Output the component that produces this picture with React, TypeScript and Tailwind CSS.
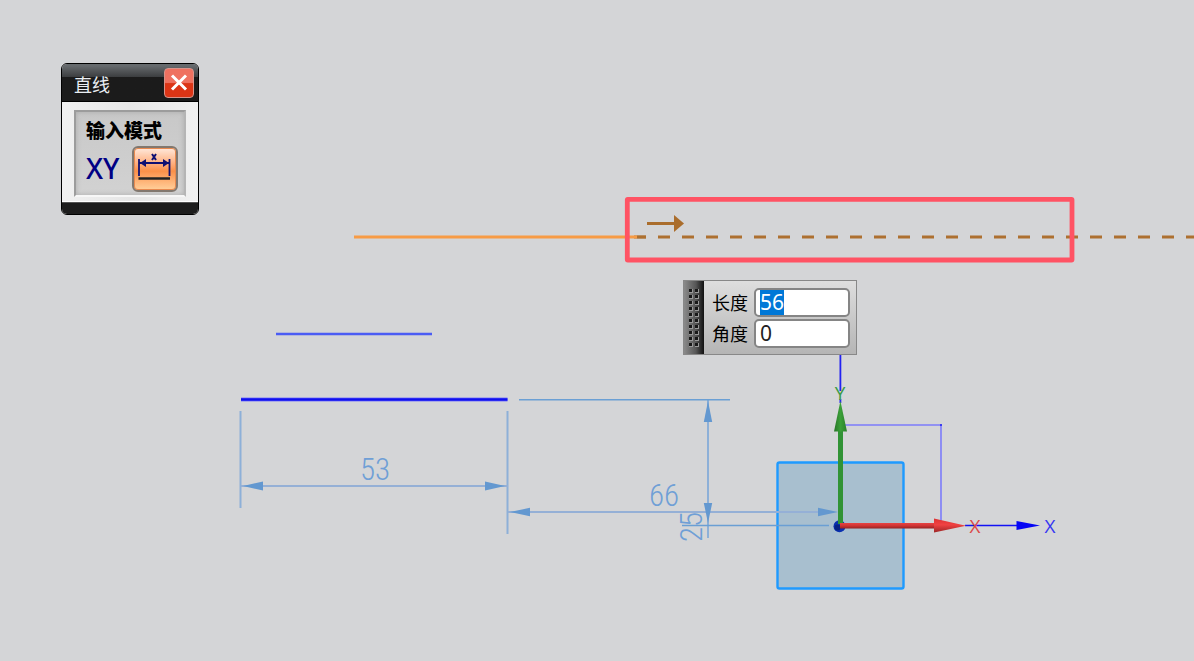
import { useEffect, useRef } from "react";

const grip = Array.from({ length: 20 }, (_, i) => i);

function Drawing() {
  return (
    <svg className="absolute inset-0 h-full w-full" role="img" aria-label="草图">
      <defs>
        <linearGradient id="redShaft" x1="0" y1="0" x2="0" y2="1">
          <stop offset="0" stopColor="#e84343" />
          <stop offset="0.5" stopColor="#cf3434" />
          <stop offset="1" stopColor="#962222" />
        </linearGradient>
        <linearGradient id="redHead" x1="0" y1="0" x2="0" y2="1">
          <stop offset="0" stopColor="#d33" />
          <stop offset="0.45" stopColor="#f04242" />
          <stop offset="1" stopColor="#9c2626" />
        </linearGradient>
        <linearGradient id="greenHead" x1="0" y1="0" x2="1" y2="0">
          <stop offset="0" stopColor="#277427" />
          <stop offset="0.5" stopColor="#3aa038" />
          <stop offset="1" stopColor="#2c802c" />
        </linearGradient>
      </defs>

      <rect x="777.5" y="462.5" width="126" height="126" rx="2" fill="#a8bfcf" stroke="#1e9aff" strokeWidth="2.4" />

      <g stroke="#8db0d8" strokeWidth="2">
        <path d="M240.5 411V508M507.5 411V534M708 400V538" />
        <path d="M241 486H508M508 512H820" stroke="#95b0d6" />
      </g>
      <path d="M519 399.7H730M682 525.5H829" stroke="#6a9fd4" strokeWidth="1.5" />
      <g fill="#6398d0">
        <path d="M243 486L263 481.5V490.5Z" />
        <path d="M505 486L485 481.5V490.5Z" />
        <path d="M510 512L530 507.8V516.2Z" />
        <path d="M838 512L818 507.8V516.2Z" />
        <path d="M708 401L703.8 422H712.2Z" />
        <path d="M708 523L703.8 503H712.2Z" />
      </g>
      <g fill="#6f9fd6" className="font-['Roboto_Condensed','Liberation_Sans_Narrow','Roboto','sans-serif'] text-[31px] font-light" textAnchor="middle">
        <text x="375" y="480">53</text>
        <text x="664" y="506">66</text>
        <text transform="translate(702 527) rotate(-90)">25</text>
      </g>

      <path d="M276 334H432" stroke="#4a5cf4" strokeWidth="2.6" />
      <path d="M241 399.5H507.5" stroke="#7d7dfa" strokeWidth="4" />
      <path d="M241 399.5H507.5" stroke="#0f0fee" strokeWidth="2.4" />

      <line x1="634" y1="237" x2="100%" y2="237" stroke="#ad7030" strokeWidth="2.8" strokeDasharray="12 12" />
      <path d="M354 237H637" stroke="#f79b45" strokeWidth="2.8" />
      <path d="M637 237H646" stroke="#ad7030" strokeWidth="2.8" />
      <path d="M647 223.5H675" stroke="#aa6d2c" strokeWidth="3" />
      <path d="M674 215L684 223.5L674 232Z" fill="#aa6d2c" />
      <rect x="627.3" y="199.3" width="444.7" height="60.7" rx="0.5" fill="none" stroke="#ff5364" strokeWidth="4.8" />

      <path d="M841 425H941V523" fill="none" stroke="#7c7cfb" strokeWidth="1.6" />
      <circle cx="941" cy="425" r="1" fill="#2020f0" />
      <path d="M840.4 354V391M840.4 399V403" stroke="#2222f2" strokeWidth="1.8" />
      <path d="M965 525.5H1020" stroke="#1212f4" strokeWidth="1.6" />
      <path d="M1016.5 521V530L1040 525.5Z" fill="#0505f5" />
      <circle cx="839.5" cy="526.3" r="6" fill="#0a30b0" />
      <circle cx="837.5" cy="527.5" r="3" fill="#062183" />
      <path d="M838 430H843V524H838Z" fill="#319335" />
      <path d="M840.4 401L847 431.5H834Z" fill="url(#greenHead)" />
      <rect x="840" y="523" width="95" height="5.5" fill="url(#redShaft)" />
      <path d="M934 518.5V532.5L966 525.7Z" fill="url(#redHead)" />
      <g className="font-['Open_Sans','sans-serif'] text-[19px]" textAnchor="middle">
        <text x="840" y="400" fill="#399b45">Y</text>
        <text x="975" y="533" fill="#dc4848">X</text>
        <text x="1050" y="533" fill="#3636f2">X</text>
      </g>
    </svg>
  );
}

function LinePanel() {
  return (
    <section className="absolute left-[61px] top-[63px] w-[138px] overflow-hidden rounded-md border border-black bg-[#ececec] font-['Noto_Sans_CJK_SC','sans-serif']">
      <header className="flex h-[38px] items-center justify-between border-b border-black bg-linear-to-b from-[#666a6d] from-5% via-[#3c3e40] via-35% to-[#1b1b1b] to-36% pr-1 pl-3">
        <h1 className="pt-0.5 text-lg leading-6 text-[#e9edf2]">直线</h1>
        <button aria-label="关闭" className="flex size-[30px] items-center justify-center rounded border border-[#d9938a] bg-linear-to-b from-[#ef7160] from-48% to-[#dc3516] to-52%">
          <svg viewBox="0 0 30 30" className="size-[30px]" aria-hidden="true">
            <path d="M7.5 7L22.5 22M22.5 7L7.5 22" stroke="#fff" strokeWidth="3.2" />
          </svg>
        </button>
      </header>
      <div className="border-b border-white bg-linear-to-r from-[#f1f1f1] via-[#e6e6e6] to-[#f1f1f1] px-3 pt-2 pb-1">
        <div className="border-2 border-t-[#9c9c9c] border-r-[#b5b5b5] border-b-[#f7f7f7] border-l-[#9c9c9c] bg-linear-to-b from-[#c8c8c8] to-[#d2d2d2] pr-1.5 pl-2 pt-1 shadow-[inset_0_0_5px_#aaa]">
          <h2 className="pl-0.5 text-[19px] leading-7 font-black whitespace-nowrap text-black">输入模式</h2>
          <div className="flex h-[51px] items-start justify-between">
            <button aria-label="坐标模式" className="pt-2 pl-0.5 font-['Noto_Sans','sans-serif'] text-[28px] leading-8 font-medium text-[#000084]">XY</button>
            <button aria-label="参数模式" aria-pressed="true" className="mt-0.5 size-[46px] shrink-0 rounded-md border-2 border-[#82786f] bg-linear-to-b from-[#ffe9dc] via-[#fb9048] via-55% to-[#ffd09b] shadow-[inset_0_0_0_1px_#e8894f]">
              <svg viewBox="0 0 42 42" className="size-full" aria-hidden="true">
                <path d="M5 11V28M35.500 11V28M5 15H35" stroke="#101073" strokeWidth="1.8" />
                <path d="M6 15L12 11V19ZM35 15L29 11V19Z" fill="#101073" />
                <path d="M18 6L22 12M22 6L18 12" stroke="#101073" strokeWidth="2" />
                <path d="M4.500 30.500H36" stroke="#222" strokeWidth="2.600" />
              </svg>
            </button>
          </div>
        </div>
      </div>
      <footer className="h-3 border-t border-[#555] bg-[#1d1d1d]" />
    </section>
  );
}

function ValuePanel() {
  const length = useRef<HTMLInputElement>(null);
  useEffect(() => {
    length.current?.focus();
    length.current?.select();
  }, []);
  const field =
    "h-[29px] w-24 rounded-[5px] border-2 border-[#858585] bg-white pl-1 font-['Noto_Sans','sans-serif'] text-[21px] leading-6 text-[#222] outline-none selection:bg-[#0078d7] selection:text-white";
  return (
    <form className="absolute left-[683px] top-[280px] flex h-[75px] w-[174px] border border-[#888] bg-linear-to-b from-[#dedede] to-[#b5b5b5]">
      <div className="grid w-5 shrink-0 grid-cols-[4px_4px] content-center justify-center gap-x-0.5 gap-y-0.5 bg-linear-to-r from-[#8b8b8b] via-[#565656] via-60% to-[#111]">
        {grip.map((i) => (
          <span key={i} className="size-1 border-r border-b border-[#999] bg-[#181818]" />
        ))}
      </div>
      <div className="flex grow flex-col justify-center gap-0.5 pr-1.5 pl-2 font-['Noto_Sans_CJK_SC','sans-serif']">
        <div className="flex items-center justify-between">
          <label htmlFor="length" className="text-lg leading-7 text-black">长度</label>
          <input id="length" ref={length} defaultValue="56" className={field} />
        </div>
        <div className="flex items-center justify-between">
          <label htmlFor="angle" className="text-lg leading-7 text-black">角度</label>
          <input id="angle" defaultValue="0" className={field} />
        </div>
      </div>
    </form>
  );
}

export default function App() {
  return (
    <main className="relative min-h-screen overflow-hidden bg-[#d4d5d7]">
      <Drawing />
      <LinePanel />
      <ValuePanel />
    </main>
  );
}
